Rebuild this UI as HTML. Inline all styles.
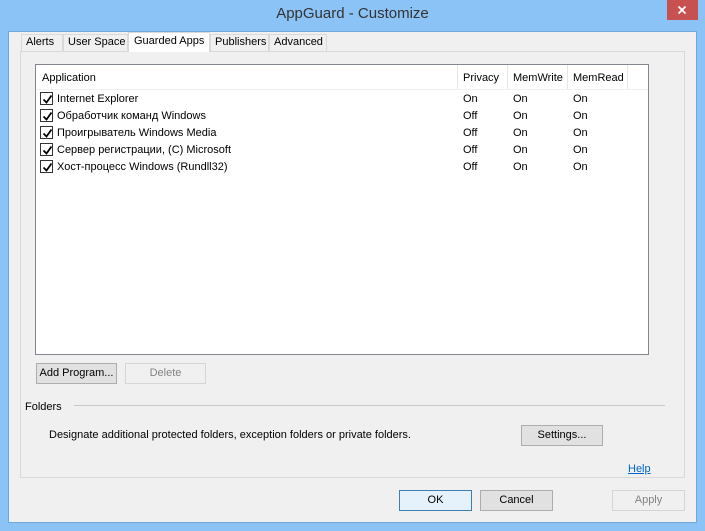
<!DOCTYPE html><html><head><style>
*{margin:0;padding:0;box-sizing:border-box}
body{width:705px;height:531px;background:#8cc3f6;position:relative;font-family:"Liberation Sans","Noto Sans CJK SC",sans-serif;font-size:11px;color:#000;overflow:hidden}
.a{position:absolute}
.client{left:8px;top:31px;width:689px;height:492px;background:#f0f0f0;border:1px solid #6fa9dc}
.btn{position:absolute;height:21px;border:1px solid #adadad;background:#e1e1e1;text-align:center;line-height:19px;font-size:11px;white-space:nowrap}
.tab{position:absolute;top:34px;height:17px;border:1px solid #d9d9d9;border-bottom:none;background:#f0f0f0;line-height:15px;padding:0 0 0 4px;white-space:nowrap;overflow:hidden}
.cb{position:absolute;left:40px;width:13px;height:13px;border:1px solid #333;background:#fff}
.cb svg{position:absolute;left:1px;top:1px}
.t{position:absolute;white-space:nowrap;line-height:13px}
</style></head><body>
<div class="a" style="left:0;top:5px;width:705px;text-align:center;font-size:15px;color:#333">AppGuard - Customize</div>
<div class="a" style="left:667px;top:0;width:31px;height:20px;background:#c75050"><svg width="31" height="20"><path d="M11.5 6.5l7 7M18.5 6.5l-7 7" stroke="#fff" stroke-width="1.8"/></svg></div>
<div class="a client"></div>
<div class="a" style="left:20px;top:51px;width:665px;height:427px;border:1px solid #d9d9d9;background:#f0f0f0"></div>
<div class="tab" style="left:21px;width:42px">Alerts</div>
<div class="tab" style="left:63px;width:65px">User Space</div>
<div class="tab" style="left:210px;width:59px">Publishers</div>
<div class="tab" style="left:269px;width:58px">Advanced</div>
<div class="tab" style="left:128px;top:32px;height:20px;width:82px;background:#fff;line-height:17px;padding-left:5px">Guarded Apps</div>
<div class="a" style="left:35px;top:64px;width:614px;height:291px;border:1px solid #828790;background:#fff"></div>
<div class="a" style="left:36px;top:89px;width:612px;height:1px;background:#f0f0f0"></div>
<div class="a" style="left:457px;top:65px;width:1px;height:24px;background:#e5e5e5"></div>
<div class="a" style="left:507px;top:65px;width:1px;height:24px;background:#e5e5e5"></div>
<div class="a" style="left:567px;top:65px;width:1px;height:24px;background:#e5e5e5"></div>
<div class="a" style="left:627px;top:65px;width:1px;height:24px;background:#e5e5e5"></div>
<div class="t" style="left:42px;top:72px">Application</div>
<div class="t" style="left:463px;top:72px">Privacy</div>
<div class="t" style="left:513px;top:72px">MemWrite</div>
<div class="t" style="left:573px;top:72px">MemRead</div>
<div class="cb" style="top:92px"><svg width="11" height="11"><path d="M1.5 5.5l3 3 5-7" stroke="#000" stroke-width="1.8" fill="none"/></svg></div>
<div class="cb" style="top:109px"><svg width="11" height="11"><path d="M1.5 5.5l3 3 5-7" stroke="#000" stroke-width="1.8" fill="none"/></svg></div>
<div class="cb" style="top:126px"><svg width="11" height="11"><path d="M1.5 5.5l3 3 5-7" stroke="#000" stroke-width="1.8" fill="none"/></svg></div>
<div class="cb" style="top:143px"><svg width="11" height="11"><path d="M1.5 5.5l3 3 5-7" stroke="#000" stroke-width="1.8" fill="none"/></svg></div>
<div class="cb" style="top:160px"><svg width="11" height="11"><path d="M1.5 5.5l3 3 5-7" stroke="#000" stroke-width="1.8" fill="none"/></svg></div>
<div class="t" style="left:57px;top:93px">Internet Explorer</div>
<div class="t" style="left:57px;top:110px">Обработчик команд Windows</div>
<div class="t" style="left:57px;top:127px">Проигрыватель Windows Media</div>
<div class="t" style="left:57px;top:144px">Сервер регистрации, (C) Microsoft</div>
<div class="t" style="left:57px;top:161px">Хост-процесс Windows (Rundll32)</div>
<div class="t" style="left:463px;top:93px">On</div><div class="t" style="left:513px;top:93px">On</div><div class="t" style="left:573px;top:93px">On</div>
<div class="t" style="left:463px;top:110px">Off</div><div class="t" style="left:513px;top:110px">On</div><div class="t" style="left:573px;top:110px">On</div>
<div class="t" style="left:463px;top:127px">Off</div><div class="t" style="left:513px;top:127px">On</div><div class="t" style="left:573px;top:127px">On</div>
<div class="t" style="left:463px;top:144px">Off</div><div class="t" style="left:513px;top:144px">On</div><div class="t" style="left:573px;top:144px">On</div>
<div class="t" style="left:463px;top:161px">Off</div><div class="t" style="left:513px;top:161px">On</div><div class="t" style="left:573px;top:161px">On</div>
<div class="btn" style="left:36px;top:363px;width:81px">Add Program...</div>
<div class="btn" style="left:125px;top:363px;width:81px;border-color:#d5d5d5;background:#f0f0f0;color:#838383">Delete</div>
<div class="t" style="left:25px;top:401px">Folders</div>
<div class="a" style="left:74px;top:405px;width:591px;height:1px;background:#c8c8c8"></div>
<div class="t" style="left:49px;top:429px">Designate additional protected folders, exception folders or private folders.</div>
<div class="btn" style="left:521px;top:425px;width:82px">Settings...</div>
<div class="t" style="left:628px;top:463px;color:#0066cc;text-decoration:underline">Help</div>
<div class="btn" style="left:399px;top:490px;width:73px;border-color:#3c7fb1;background:#e5f1fb">OK</div>
<div class="btn" style="left:480px;top:490px;width:73px">Cancel</div>
<div class="btn" style="left:612px;top:490px;width:73px;border-color:#d5d5d5;background:#f0f0f0;color:#838383">Apply</div>
</body></html>
